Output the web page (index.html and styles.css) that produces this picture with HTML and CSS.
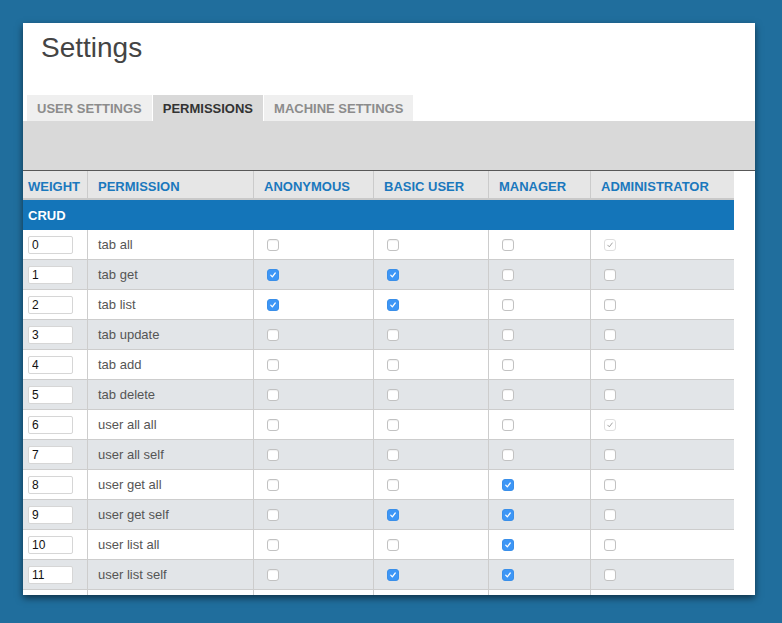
FILE: index.html
```html
<!DOCTYPE html>
<html>
<head>
<meta charset="utf-8">
<title>Settings</title>
<link rel="stylesheet" href="styles.css">
</head>
<body>
<div class="panel">
  <h1 class="title">Settings</h1>
  <div class="tabs">
    <div class="tab">USER SETTINGS</div>
    <div class="tab active">PERMISSIONS</div>
    <div class="tab">MACHINE SETTINGS</div>
  </div>
  <div class="band"></div>
  <div class="grid">
    <div class="hrow">
      <div class="hc first">WEIGHT</div>
      <div class="hc">PERMISSION</div>
      <div class="hc">ANONYMOUS</div>
      <div class="hc">BASIC USER</div>
      <div class="hc">MANAGER</div>
      <div class="hc last">ADMINISTRATOR</div>
    </div>
    <div class="group">CRUD</div>

    <div class="row">
      <div class="c first"><input class="w" value="0"></div>
      <div class="c name">tab all</div>
      <div class="c"><span class="cb"></span></div>
      <div class="c"><span class="cb"></span></div>
      <div class="c"><span class="cb"></span></div>
      <div class="c last"><span class="cb dis"><svg viewBox="0 0 12 12"><path d="M3.3 6.2 L5.2 8.2 L8.7 3.6"/></svg></span></div>
    </div>
    <div class="row alt">
      <div class="c first"><input class="w" value="1"></div>
      <div class="c name">tab get</div>
      <div class="c"><span class="cb on"><svg viewBox="0 0 12 12"><path d="M3.3 6.2 L5.2 8.2 L8.7 3.6"/></svg></span></div>
      <div class="c"><span class="cb on"><svg viewBox="0 0 12 12"><path d="M3.3 6.2 L5.2 8.2 L8.7 3.6"/></svg></span></div>
      <div class="c"><span class="cb"></span></div>
      <div class="c last"><span class="cb"></span></div>
    </div>
    <div class="row">
      <div class="c first"><input class="w" value="2"></div>
      <div class="c name">tab list</div>
      <div class="c"><span class="cb on"><svg viewBox="0 0 12 12"><path d="M3.3 6.2 L5.2 8.2 L8.7 3.6"/></svg></span></div>
      <div class="c"><span class="cb on"><svg viewBox="0 0 12 12"><path d="M3.3 6.2 L5.2 8.2 L8.7 3.6"/></svg></span></div>
      <div class="c"><span class="cb"></span></div>
      <div class="c last"><span class="cb"></span></div>
    </div>
    <div class="row alt">
      <div class="c first"><input class="w" value="3"></div>
      <div class="c name">tab update</div>
      <div class="c"><span class="cb"></span></div>
      <div class="c"><span class="cb"></span></div>
      <div class="c"><span class="cb"></span></div>
      <div class="c last"><span class="cb"></span></div>
    </div>
    <div class="row">
      <div class="c first"><input class="w" value="4"></div>
      <div class="c name">tab add</div>
      <div class="c"><span class="cb"></span></div>
      <div class="c"><span class="cb"></span></div>
      <div class="c"><span class="cb"></span></div>
      <div class="c last"><span class="cb"></span></div>
    </div>
    <div class="row alt">
      <div class="c first"><input class="w" value="5"></div>
      <div class="c name">tab delete</div>
      <div class="c"><span class="cb"></span></div>
      <div class="c"><span class="cb"></span></div>
      <div class="c"><span class="cb"></span></div>
      <div class="c last"><span class="cb"></span></div>
    </div>
    <div class="row">
      <div class="c first"><input class="w" value="6"></div>
      <div class="c name">user all all</div>
      <div class="c"><span class="cb"></span></div>
      <div class="c"><span class="cb"></span></div>
      <div class="c"><span class="cb"></span></div>
      <div class="c last"><span class="cb dis"><svg viewBox="0 0 12 12"><path d="M3.3 6.2 L5.2 8.2 L8.7 3.6"/></svg></span></div>
    </div>
    <div class="row alt">
      <div class="c first"><input class="w" value="7"></div>
      <div class="c name">user all self</div>
      <div class="c"><span class="cb"></span></div>
      <div class="c"><span class="cb"></span></div>
      <div class="c"><span class="cb"></span></div>
      <div class="c last"><span class="cb"></span></div>
    </div>
    <div class="row">
      <div class="c first"><input class="w" value="8"></div>
      <div class="c name">user get all</div>
      <div class="c"><span class="cb"></span></div>
      <div class="c"><span class="cb"></span></div>
      <div class="c"><span class="cb on"><svg viewBox="0 0 12 12"><path d="M3.3 6.2 L5.2 8.2 L8.7 3.6"/></svg></span></div>
      <div class="c last"><span class="cb"></span></div>
    </div>
    <div class="row alt">
      <div class="c first"><input class="w" value="9"></div>
      <div class="c name">user get self</div>
      <div class="c"><span class="cb"></span></div>
      <div class="c"><span class="cb on"><svg viewBox="0 0 12 12"><path d="M3.3 6.2 L5.2 8.2 L8.7 3.6"/></svg></span></div>
      <div class="c"><span class="cb on"><svg viewBox="0 0 12 12"><path d="M3.3 6.2 L5.2 8.2 L8.7 3.6"/></svg></span></div>
      <div class="c last"><span class="cb"></span></div>
    </div>
    <div class="row">
      <div class="c first"><input class="w" value="10"></div>
      <div class="c name">user list all</div>
      <div class="c"><span class="cb"></span></div>
      <div class="c"><span class="cb"></span></div>
      <div class="c"><span class="cb on"><svg viewBox="0 0 12 12"><path d="M3.3 6.2 L5.2 8.2 L8.7 3.6"/></svg></span></div>
      <div class="c last"><span class="cb"></span></div>
    </div>
    <div class="row alt">
      <div class="c first"><input class="w" value="11"></div>
      <div class="c name">user list self</div>
      <div class="c"><span class="cb"></span></div>
      <div class="c"><span class="cb on"><svg viewBox="0 0 12 12"><path d="M3.3 6.2 L5.2 8.2 L8.7 3.6"/></svg></span></div>
      <div class="c"><span class="cb on"><svg viewBox="0 0 12 12"><path d="M3.3 6.2 L5.2 8.2 L8.7 3.6"/></svg></span></div>
      <div class="c last"><span class="cb"></span></div>
    </div>
    <div class="row">
      <div class="c first"><input class="w" value=""></div>
      <div class="c name"></div>
      <div class="c"></div>
      <div class="c"></div>
      <div class="c"></div>
      <div class="c last"></div>
    </div>
  </div>
</div>
</body>
</html>
```
FILE: styles.css
```css
* { box-sizing: border-box; }
html, body { margin: 0; padding: 0; }
body {
  background: #206e9d;
  font-family: "Liberation Sans", Arial, sans-serif;
  width: 782px;
  height: 623px;
  overflow: hidden;
}
.panel {
  margin: 23px 0 0 23px;
  width: 732px;
  height: 572px;
  background: #fff;
  overflow: hidden;
  box-shadow: 0 3px 7px rgba(0, 0, 0, 0.55);
}
.title {
  margin: 0;
  padding: 9px 0 0 18px;
  font-size: 28px;
  line-height: 32px;
  font-weight: normal;
  color: #444;
}
.tabs {
  display: flex;
  gap: 1px;
  margin-top: 31px;
  padding-left: 4px;
}
.tab {
  height: 26px;
  line-height: 27px;
  padding: 0 10px;
  font-size: 13px;
  font-weight: bold;
  color: #8c8c8c;
  background: #efefef;
}
.tab.active {
  background: #d9d9d9;
  color: #333;
}
.band {
  height: 50px;
  background: #d9d9d9;
  border-bottom: 1px solid #585858;
}
.grid { width: 711px; }
.hrow, .row {
  display: grid;
  grid-template-columns: 65px 166px 120px 115px 102px 143px;
}
.hrow {
  height: 29px;
  background: #e6e6e6;
  border-bottom: 2px solid #c9c9c9;
}
.hc {
  display: flex;
  align-items: center;
  padding: 3px 0 0 10px;
  font-size: 13px;
  font-weight: bold;
  color: #1a78bd;
  border-right: 1px solid #cbcbcb;
}
.hc.first { padding-left: 5px; }
.hc.last { border-right: none; }
.group {
  height: 30px;
  line-height: 31px;
  padding-left: 5px;
  background: #1475b9;
  color: #fff;
  font-size: 13px;
  font-weight: bold;
}
.row {
  height: 30px;
  background: #fff;
  border-bottom: 1px solid #cdcdcd;
}
.row.alt { background: #e2e5e8; }
.c {
  display: flex;
  align-items: center;
  padding-left: 13px;
  border-right: 1px solid #cdcdcd;
}
.c.first { padding-left: 5px; }
.c.name {
  padding-left: 10px;
  font-size: 13px;
  color: #555;
}
.c.last { border-right: none; }
.w {
  width: 45px;
  height: 18px;
  margin: 0;
  padding: 0 3px;
  border: 1px solid #d6d6d6;
  border-radius: 2px;
  background: #fff;
  font-family: "Liberation Sans", Arial, sans-serif;
  font-size: 12px;
  color: #111;
  outline: none;
}
.cb {
  display: block;
  width: 12px;
  height: 12px;
  border: 1px solid #c2c2c2;
  border-radius: 3px;
  background: #fff;
  box-shadow: inset 0 1px 1px rgba(0, 0, 0, 0.06);
}
.cb svg {
  display: block;
  width: 100%;
  height: 100%;
}
.cb path {
  fill: none;
  stroke-width: 1.5;
  stroke-linecap: round;
  stroke-linejoin: round;
}
.cb.on {
  background: #3d96f6;
  border-color: #3a8fe9;
  box-shadow: none;
}
.cb.on path { stroke: #fff; }
.cb.dis {
  border-color: #dedede;
  box-shadow: none;
}
.cb.dis path { stroke: #9a9a9a; stroke-width: 1.1; }
```
